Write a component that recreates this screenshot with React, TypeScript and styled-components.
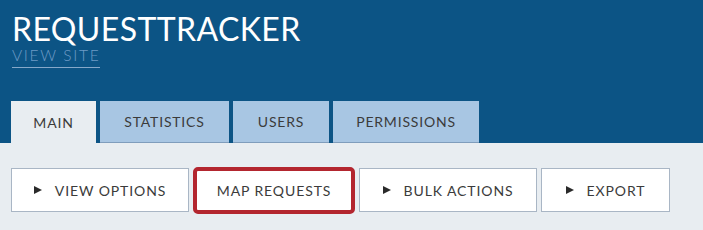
import React from 'react';
import styled, { createGlobalStyle } from 'styled-components';

const GlobalStyle = createGlobalStyle`
  html, body {
    margin: 0;
    padding: 0;
    background: #e8edf1;
    font-family: Lato, 'Liberation Sans', sans-serif;
  }
`;

const Header = styled.header`
  background-color: #0c5485;
  height: 143px;
  display: flex;
  flex-direction: column;
  padding: 0 0 0 11px;
  box-sizing: border-box;
`;

const Title = styled.h1`
  margin: 13px 0 0 1px;
  font-size: 32px;
  font-weight: 400;
  line-height: 32px;
  letter-spacing: 0.4px;
  color: #ffffff;
`;

const SiteLink = styled.a`
  align-self: flex-start;
  margin: 2px 0 0 1px;
  padding-bottom: 3px;
  font-size: 15.5px;
  line-height: 17px;
  letter-spacing: 1.7px;
  font-weight: 300;
  color: #6e9bc6;
  text-decoration: none;
  border-bottom: 1px solid #86a8c9;
`;

const Tabs = styled.nav`
  display: flex;
  gap: 4px;
  margin-top: auto;
`;

const Tab = styled.div<{ $active?: boolean; $width: number }>`
  width: ${(p) => p.$width}px;
  height: 42px;
  box-sizing: border-box;
  display: flex;
  align-items: center;
  justify-content: center;
  font-size: 14px;
  letter-spacing: 0.8px;
  color: #3b3b3b;
  background: ${(p) => (p.$active ? '#e8edf1' : '#a8c6e3')};
  border-bottom: ${(p) => (p.$active ? 'none' : '1px solid #7f9dbc')};
`;

const Toolbar = styled.div`
  display: flex;
  align-items: flex-start;
  gap: 4px;
  padding: 25px 11px 0;
`;

const Button = styled.button<{ $focused?: boolean; $width: number }>`
  width: ${(p) => p.$width}px;
  height: ${(p) => (p.$focused ? 47 : 44)}px;
  margin-top: ${(p) => (p.$focused ? -1 : 0)}px;
  box-sizing: border-box;
  display: flex;
  align-items: center;
  justify-content: center;
  gap: 13px;
  background: #ffffff;
  border: ${(p) => (p.$focused ? '4px solid #b3262f' : '1px solid #a9b6c5')};
  border-radius: ${(p) => (p.$focused ? '5px' : '0')};
  font-family: Lato, 'Liberation Sans', sans-serif;
  font-size: 14px;
  letter-spacing: 0.9px;
  color: #3b3b3b;
  padding: 0;
`;

const Arrow = styled.span`
  width: 0;
  height: 0;
  border-left: 8px solid #2a2a2a;
  border-top: 4px solid transparent;
  border-bottom: 4px solid transparent;
`;

const tabs = [
  { label: 'MAIN', width: 85, active: true },
  { label: 'STATISTICS', width: 129 },
  { label: 'USERS', width: 96 },
  { label: 'PERMISSIONS', width: 146 },
];

const buttons = [
  { label: 'VIEW OPTIONS', width: 178, arrow: true },
  { label: 'MAP REQUESTS', width: 162, focused: true },
  { label: 'BULK ACTIONS', width: 178, arrow: true },
  { label: 'EXPORT', width: 129, arrow: true },
];

export default function App() {
  return (
    <>
      <GlobalStyle />
      <Header>
        <Title>REQUESTTRACKER</Title>
        <SiteLink href="#">VIEW SITE</SiteLink>
        <Tabs>
          {tabs.map((t) => (
            <Tab key={t.label} $width={t.width} $active={t.active}>
              {t.label}
            </Tab>
          ))}
        </Tabs>
      </Header>
      <Toolbar>
        {buttons.map((b) => (
          <Button key={b.label} $width={b.width} $focused={b.focused}>
            {b.arrow && <Arrow />}
            {b.label}
          </Button>
        ))}
      </Toolbar>
    </>
  );
}
